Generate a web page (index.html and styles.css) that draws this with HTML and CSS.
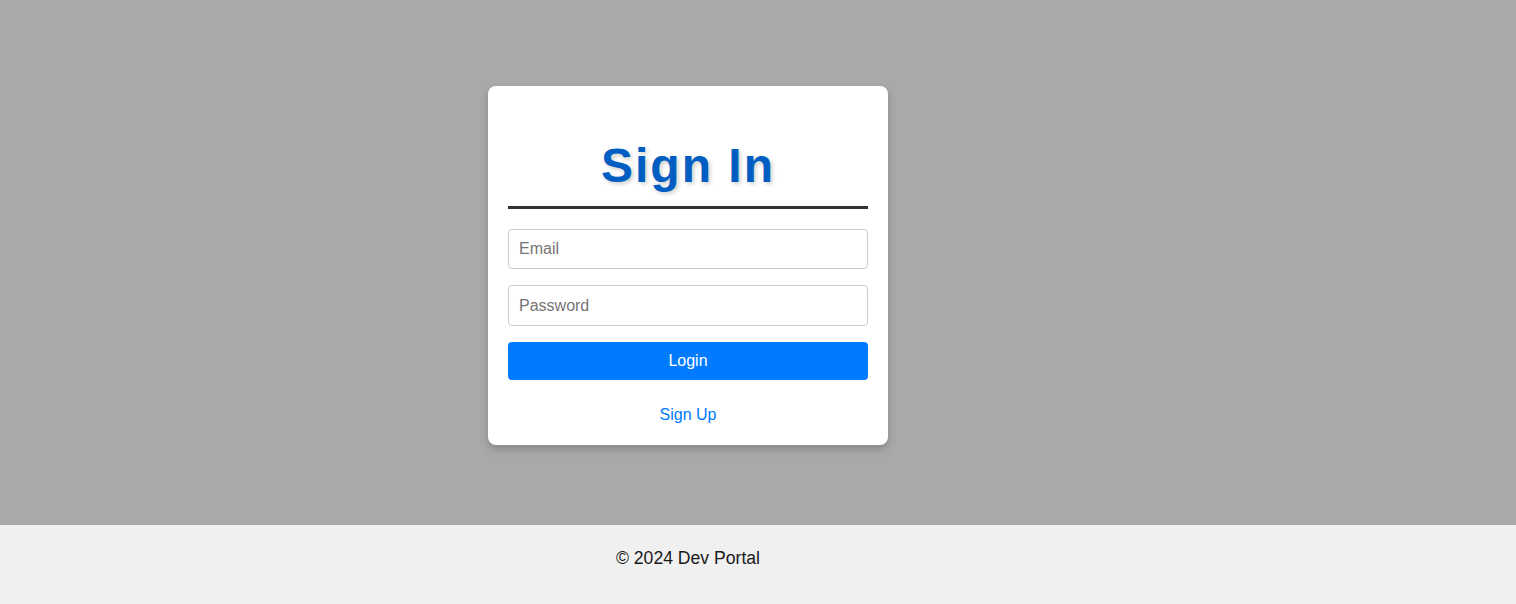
FILE: index.html
```html
<!DOCTYPE html>
<html lang="en">
<head>
<meta charset="utf-8">
<title>Sign In - Dev Portal</title>
<link rel="stylesheet" href="styles.css">
</head>
<body>
<main class="main">
  <div class="card">
    <h2 class="title">Sign In</h2>
    <form class="form">
      <input class="field" type="email" placeholder="Email">
      <input class="field field-last" type="password" placeholder="Password">
      <button class="btn" type="button">Login</button>
    </form>
    <p class="alt"><a class="link" href="#">Sign Up</a></p>
  </div>
</main>
<footer class="footer">
  <p class="copy">© 2024 Dev Portal</p>
</footer>
</body>
</html>
```
FILE: styles.css
```css
* { box-sizing: border-box; }
html, body { margin: 0; padding: 0; }
body {
  font-family: "Liberation Sans", Arial, sans-serif;
  background: #a9a9a9;
  color: #222;
}
.main {
  height: 525px;
  padding: 86px 140px 0 0;
  display: flex;
  justify-content: center;
  align-items: flex-start;
}
.card {
  width: 400px;
  background: #fff;
  border-radius: 8px;
  padding: 20px;
  box-shadow: 0 4px 8px rgba(0, 0, 0, 0.2);
}
.title {
  margin: 32px 0 20px;
  padding-bottom: 13px;
  border-bottom: 3px solid #333;
  text-align: center;
  font-size: 48px;
  line-height: 55px;
  font-weight: bold;
  letter-spacing: 2px;
  color: #005ec2;
  text-shadow: 2px 2px 4px rgba(0, 0, 0, 0.2);
}
.form {
  display: flex;
  flex-direction: column;
  gap: 16px;
  margin: 0;
}
.field {
  height: 40px;
  width: 100%;
  padding: 0 10px;
  border: 1px solid #ccc;
  border-radius: 4px;
  font-family: inherit;
  font-size: 16px;
  color: #333;
  background: #fff;
}
.field-last { height: 41px; }
.field::placeholder { color: #757575; }
.btn {
  height: 38px;
  width: 100%;
  border: none;
  border-radius: 4px;
  background: #007bff;
  color: #fff;
  font-family: inherit;
  font-size: 16px;
  cursor: pointer;
}
.alt {
  margin: 25px 0 0;
  text-align: center;
  font-size: 16px;
  line-height: 20px;
}
.link { color: #007bff; text-decoration: none; }
.footer {
  height: 79px;
  background: #f0f0f0;
  padding: 0 140px 0 0;
  display: flex;
  justify-content: center;
}
.copy {
  margin: 23px 0 0;
  font-size: 17.6px;
  line-height: 20px;
  color: #1a1a1a;
}
```
